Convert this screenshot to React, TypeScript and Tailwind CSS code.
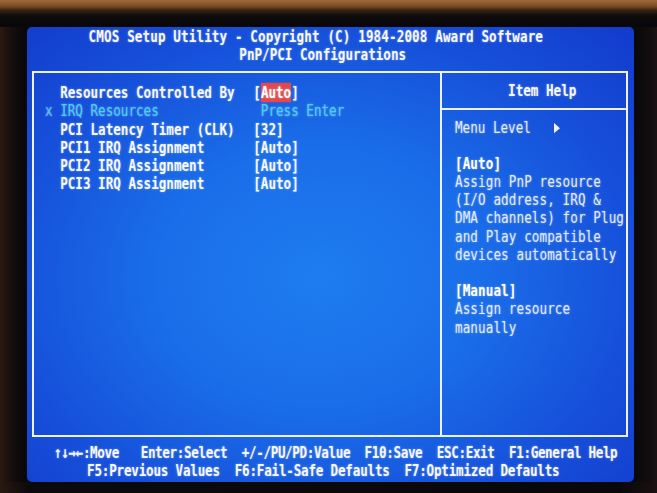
import type { ReactNode } from "react";

// one text-mode row of the setup screen (80 x 25 cells, 7.585px x 18.2px)
function Line({ children, className = "" }: { children?: ReactNode; className?: string }) {
  return (
    <div className={`flex h-[18.2px] items-center whitespace-pre ${className}`}>
      <div className="flex items-center leading-[11px] scale-y-[1.3]">{children}</div>
    </div>
  );
}

type Setting = { mark?: string; label: string; value: ReactNode; sub?: boolean };

const settings: Setting[] = [
  {
    label: "Resources Controlled By",
    value: (
      <>
        [<span className="bg-[#e4474c] text-white">Auto</span>]
      </>
    ),
  },
  {
    mark: "x",
    label: "IRQ Resources",
    sub: true,
    value: <span className="pl-[1ch] font-normal text-[#44d3f3]">Press Enter</span>,
  },
  { label: "PCI Latency Timer (CLK)", value: "[32]" },
  { label: "PCI1 IRQ Assignment", value: "[Auto]" },
  { label: "PCI2 IRQ Assignment", value: "[Auto]" },
  { label: "PCI3 IRQ Assignment", value: "[Auto]" },
];

type HelpLine = { text: string; head?: boolean };

const help: HelpLine[] = [
  { text: "" },
  { text: "[Auto]", head: true },
  { text: "Assign PnP resource" },
  { text: "(I/O address, IRQ &" },
  { text: "DMA channels) for Plug" },
  { text: "and Play compatible" },
  { text: "devices automatically" },
  { text: "" },
  { text: "[Manual]", head: true },
  { text: "Assign resource" },
  { text: "manually" },
];

function SettingsPane() {
  return (
    <div className="flex w-[406px] flex-col pl-[11px] pt-[10.6px]">
      {settings.map((s) => (
        <Line key={s.label}>
          <span className={`w-[2ch] ${s.sub ? "font-normal text-[#4cc8f2]" : ""}`}>{s.mark ?? ""}</span>
          <span className={`w-[calc(26ch-4px)] ${s.sub ? "font-normal text-[#44d3f3]" : ""}`}>{s.label}</span>
          <span>{s.value}</span>
        </Line>
      ))}
    </div>
  );
}

function HelpPane() {
  return (
    <div className="flex flex-1 flex-col pt-[8.6px]">
      <Line className="pl-[13px]">{"       Item Help"}</Line>
      <div className="flex h-[18.2px] items-center">
        <div className="h-[2px] w-full bg-[#eef2ff]" />
      </div>
      <Line className="pl-[13px]">
        <span className="font-normal text-[#e3ecff]">{"Menu Level   "}</span>
        <span className="flex w-[1ch] justify-center">
          <svg width="6" height="8" viewBox="0 0 6 8">
            <polygon points="0,0 6,4 0,8" fill="#eef2ff" />
          </svg>
        </span>
      </Line>
      {help.map((h, i) => (
        <Line key={i} className="pl-[13px] tracking-[0.1px]">
          <span className={h.head ? "text-white" : "font-normal text-[#e3ecff]"}>{h.text}</span>
        </Line>
      ))}
    </div>
  );
}

export default function App() {
  return (
    <div className="flex h-[493px] w-[657px] flex-col overflow-hidden bg-[#09080b]">
      {/* monitor frame above the tube */}
      <div className="h-[27px] bg-[linear-gradient(180deg,#a06a38_0px,#7c4d27_6px,#3a2416_10px,#120d0d_15px,#08080b_24px)]" />
      <div className="flex">
        <div className="w-[27px] bg-[linear-gradient(90deg,#2b1912_0px,#160e0c_12px,#08080b_24px)]" />
        <div className="flex h-[455px] w-[607px] flex-col rounded-[5px] bg-[radial-gradient(ellipse_at_48%_55%,#1e7cf0_0%,#1a6ee9_36%,#1650da_70%,#133acc_100%)] font-['DejaVu_Sans_Mono','Liberation_Mono',monospace] text-[12.6px] font-bold text-[#f6f8ff] [text-shadow:0_0_2px_rgba(255,255,255,0.45)]">
          <Line className="tracking-[0.12px]">{"        CMOS Setup Utility - Copyright (C) 1984-2008 Award Software"}</Line>
          <Line>{"                            PnP/PCI Configurations"}</Line>
          <div className="ml-[5px] mt-[7.6px] flex h-[366px] w-[596px] border-2 border-[#eef2ff]">
            <SettingsPane />
            <div className="w-[2px] bg-[#eef2ff]" />
            <HelpPane />
          </div>
          <div className="mt-[6px]">
            <Line className="pl-[27px] tracking-[-0.36px]">
              {"↑↓→←:Move   Enter:Select  +/-/PU/PD:Value  F10:Save  ESC:Exit  F1:General Help"}
            </Line>
            <Line className="pl-[60px] tracking-[-0.2px]">
              {"F5:Previous Values  F6:Fail-Safe Defaults  F7:Optimized Defaults"}
            </Line>
          </div>
        </div>
        <div className="w-[23px] bg-[linear-gradient(90deg,#08080b_0px,#120c0d_14px,#1c1214_23px)]" />
      </div>
      <div className="flex-1 bg-[linear-gradient(90deg,#2a1812_0px,#0a090b_30px,#08080b_620px,#1a1112_657px)]" />
    </div>
  );
}
